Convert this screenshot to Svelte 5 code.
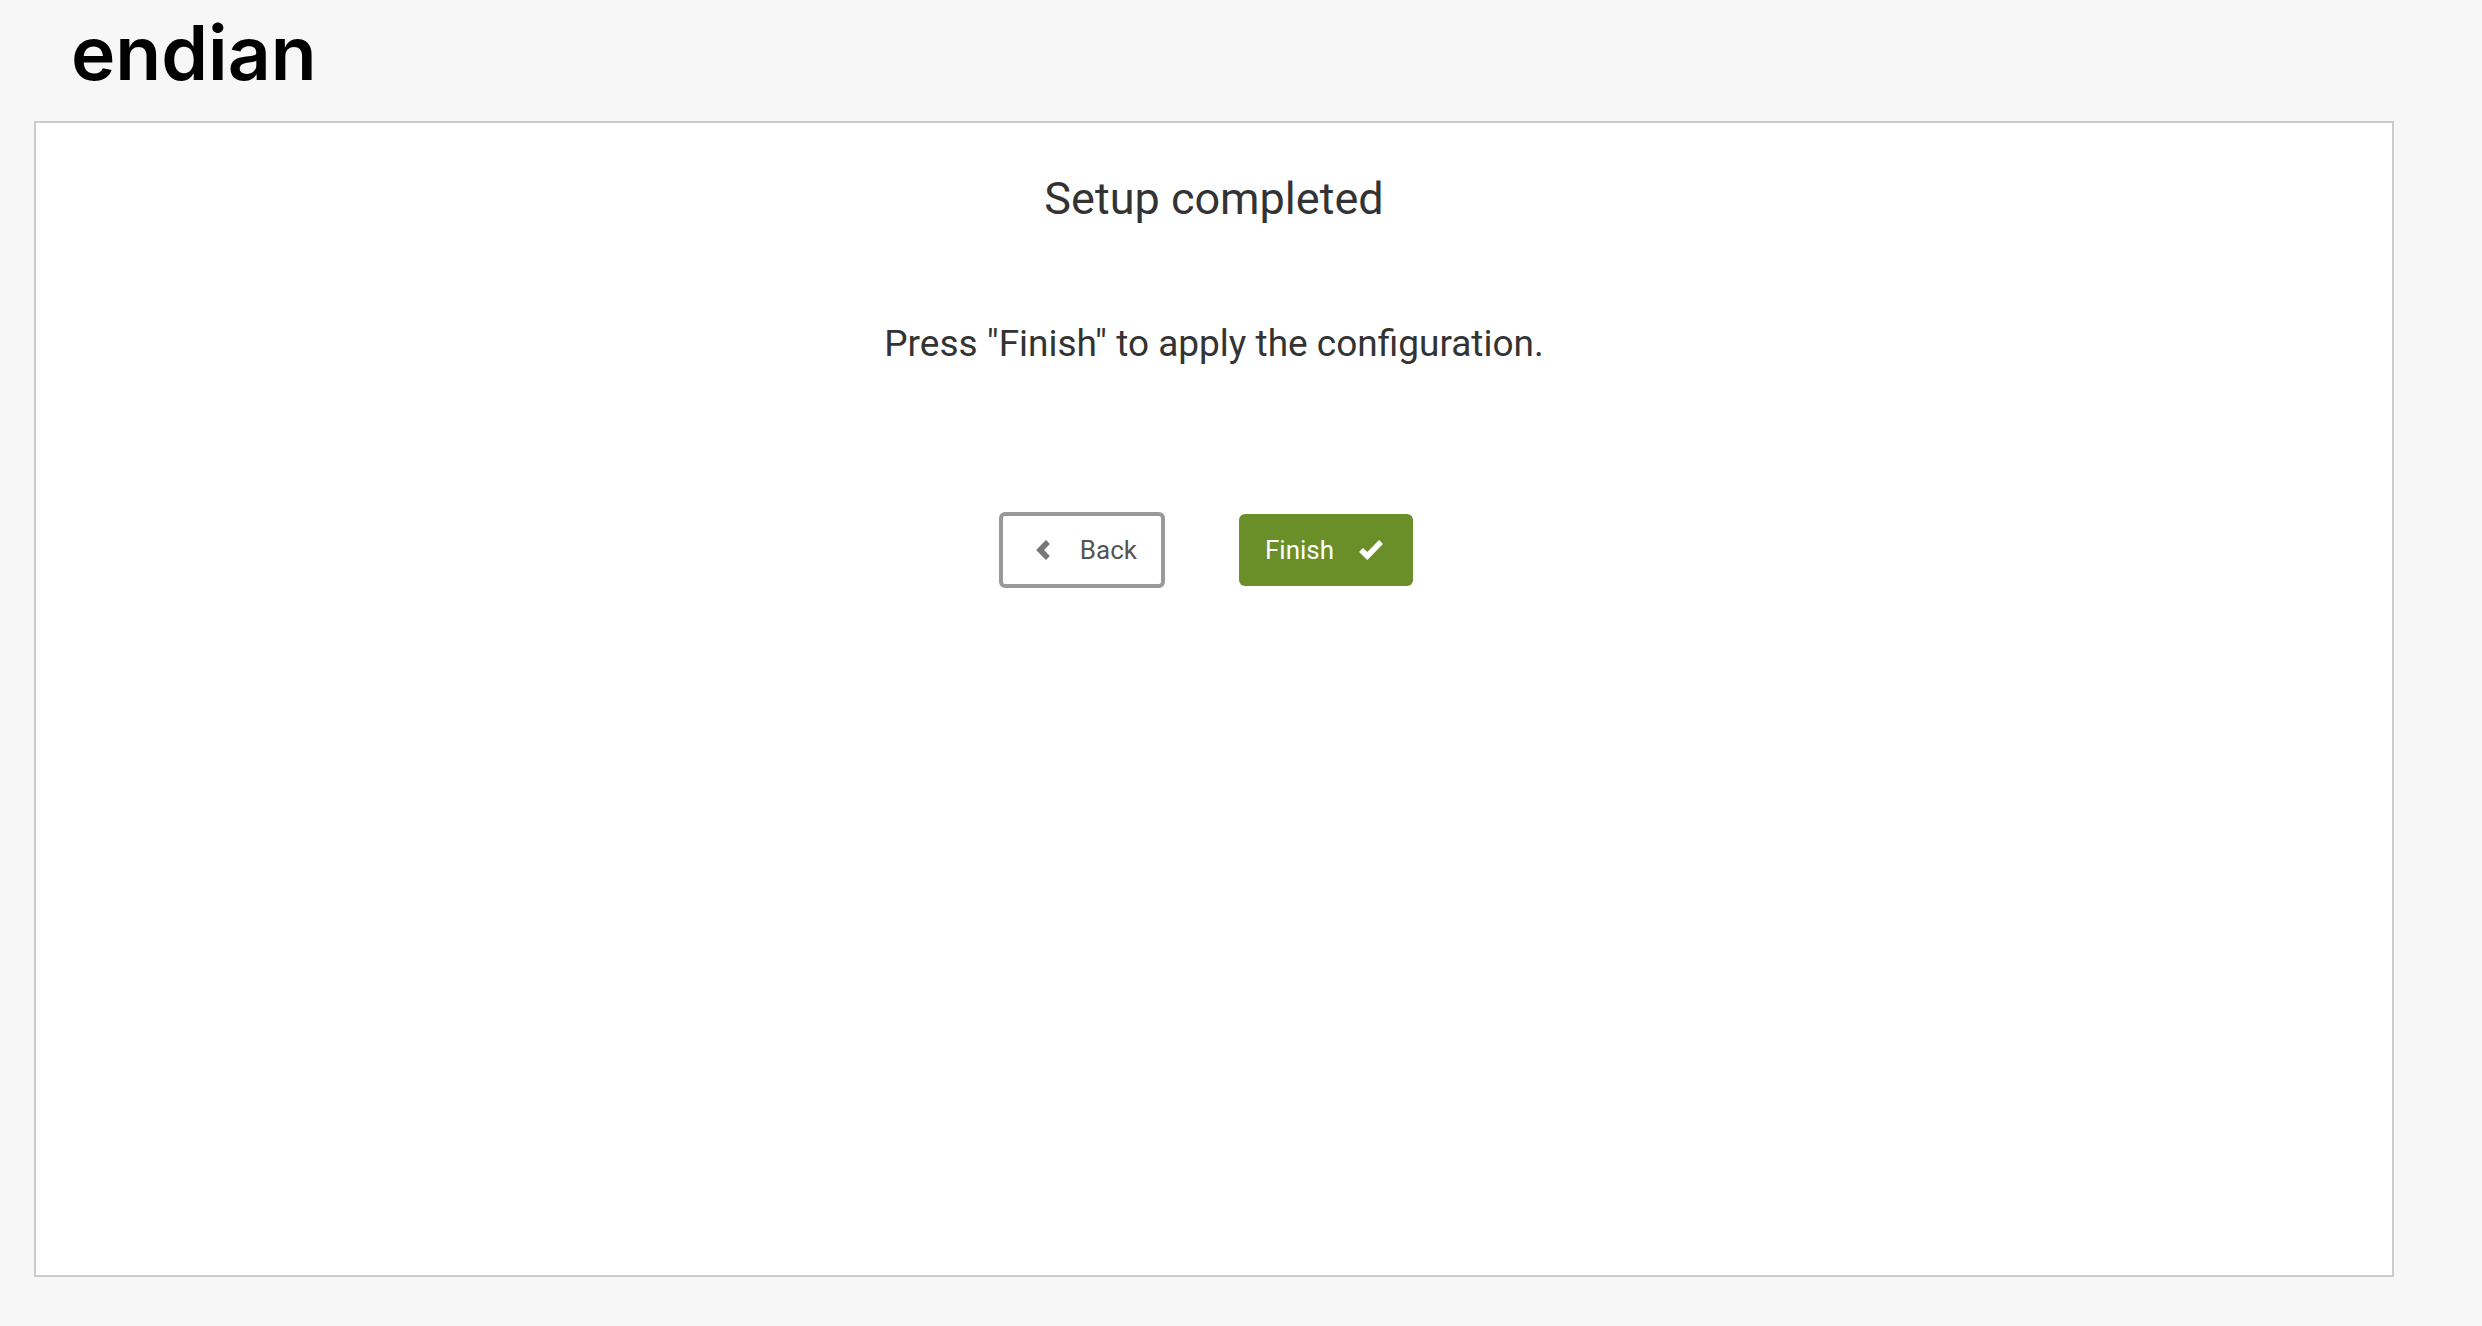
<script>
  let applied = $state(false);

  function goBack() {
    history.back();
  }

  function finish() {
    applied = true;
  }
</script>

<style>
  :global(body) {
    margin: 0;
    color: #333;
    background: #f7f7f7;
    font-family: Roboto, "Liberation Sans", sans-serif;
  }
  .page {
    display: flex;
    flex-direction: column;
    box-sizing: border-box;
    min-height: 100vh;
    padding: 9px 88px 49px 34px;
  }
  header {
    display: flex;
    align-items: flex-start;
    height: 112px;
    padding-left: 37px;
  }
  .logo {
    color: #000;
    font-family: Inter, sans-serif;
    font-size: 75px;
    font-weight: 600;
    line-height: 88px;
    text-decoration: none;
  }
  main {
    flex: 1;
    padding: 48px 24px;
    border: 2px solid #ccc;
    background: #fff;
    text-align: center;
  }
  h1 {
    margin: 0;
    font-size: 45px;
    font-weight: 400;
    line-height: 56px;
  }
  p {
    margin: 93px 0 0;
    font-size: 37px;
    line-height: 48px;
  }
  .actions {
    display: flex;
    justify-content: center;
    align-items: center;
    gap: 74px;
    margin: 144px 16px 0 0;
  }
  button {
    display: flex;
    align-items: center;
    border: 0;
    border-radius: 6px;
    font-family: inherit;
    font-size: 26px;
    line-height: 32px;
    cursor: pointer;
  }
  .back {
    gap: 30px;
    padding: 18px 24px 18px 33px;
    border: 4px solid #999;
    color: #555;
    background: #fff;
  }
  .back svg {
    width: 14px;
    height: 20px;
    fill: #777;
  }
  .finish {
    gap: 25px;
    padding: 20px 30px 20px 26px;
    color: #fff;
    background: #6a8e28;
  }
  .finish svg {
    width: 24px;
    height: 20px;
    fill: #fff;
  }
</style>

<div class="page">
  <header>
    <a class="logo" href="/">endian</a>
  </header>
  <main>
    <h1>Setup completed</h1>
    <p>Press "Finish" to apply the configuration.</p>
    <div class="actions">
      <button class="back" type="button" onclick={goBack}>
        <svg viewBox="0 0 14 20" aria-hidden="true"><path d="M9.4 .6Q10 0 10.6 .6L13.4 3.4Q14 4 13.4 4.6L8 10L13.4 15.4Q14 16 13.4 16.6L10.6 19.4Q10 20 9.4 19.4L.6 10.6Q0 10 .6 9.4Z"/></svg>
        Back
      </button>
      <button class="finish" type="button" disabled={applied} onclick={finish}>
        Finish
        <svg viewBox="0 0 24 20" aria-hidden="true"><path d="M.6 12.4Q0 11.8 .6 11.2L3.4 8.4Q4 7.8 4.6 8.4L8.3 12L19.5 .6Q20.1 0 20.7 .6L23.4 3.4Q24 4 23.4 4.6L8.9 19.4Q8.3 20 7.7 19.4Z"/></svg>
      </button>
    </div>
  </main>
</div>
